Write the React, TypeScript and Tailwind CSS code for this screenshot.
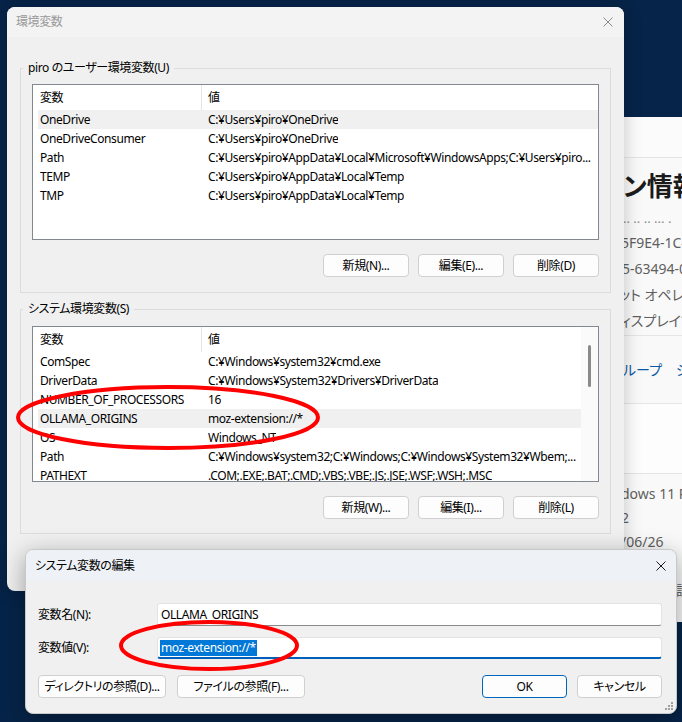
import React from "react";

type Row = [string, string];

const userRows: Row[] = [
  ["OneDrive", "C:¥Users¥piro¥OneDrive"],
  ["OneDriveConsumer", "C:¥Users¥piro¥OneDrive"],
  ["Path", "C:¥Users¥piro¥AppData¥Local¥Microsoft¥WindowsApps;C:¥Users¥piro..."],
  ["TEMP", "C:¥Users¥piro¥AppData¥Local¥Temp"],
  ["TMP", "C:¥Users¥piro¥AppData¥Local¥Temp"],
];

const sysRows: Row[] = [
  ["ComSpec", "C:¥Windows¥system32¥cmd.exe"],
  ["DriverData", "C:¥Windows¥System32¥Drivers¥DriverData"],
  ["NUMBER_OF_PROCESSORS", "16"],
  ["OLLAMA_ORIGINS", "moz-extension://*"],
  ["OS", "Windows_NT"],
  ["Path", "C:¥Windows¥system32;C:¥Windows;C:¥Windows¥System32¥Wbem;..."],
  ["PATHEXT", ".COM;.EXE;.BAT;.CMD;.VBS;.VBE;.JS;.JSE;.WSF;.WSH;.MSC"],
];

function CloseX({ color }: { color: string }) {
  return (
    <svg width="10" height="10" viewBox="0 0 10 10">
      <path d="M0.5 0.5 L9.5 9.5 M9.5 0.5 L0.5 9.5" stroke={color} strokeWidth="1" fill="none" />
    </svg>
  );
}

function WinButton({ children, className }: { children: React.ReactNode; className: string }) {
  return (
    <div className={"h-[23px] flex items-center justify-center rounded-[4px] border bg-[#fdfdfd] text-[12px] text-black " + className}>
      {children}
    </div>
  );
}

function ListBox({ rows, selected, scroll }: { rows: Row[]; selected: number; scroll: boolean }) {
  return (
    <div className="h-[156px] border border-[#828790] bg-white flex overflow-hidden">
      <div className="flex-1 min-w-0 flex flex-col">
        <div className="h-[25px] shrink-0 flex items-stretch text-[12px]">
          <div className="w-[169px] shrink-0 pl-[7px] flex items-center border-r border-[#e5e5e5]">変数</div>
          <div className="pl-[6px] flex items-center">値</div>
        </div>
        {rows.map((r, i) => (
          <div
            key={i}
            className={
              "h-[19px] shrink-0 ml-[5px] flex items-center text-[12px] whitespace-nowrap " +
              (i === selected ? "bg-[#f0f0f0]" : "")
            }
          >
            <div className="w-[163px] shrink-0 pl-[2px]">{r[0]}</div>
            <div className="pl-[7px] overflow-hidden">{r[1]}</div>
          </div>
        ))}
      </div>
      {scroll && (
        <div className="w-[17px] shrink-0 bg-[#fafafa] flex justify-center pt-[18px]">
          <div className="w-[3px] h-[42px] rounded-full bg-[#8a8a8a]" />
        </div>
      )}
    </div>
  );
}

function Group({
  label,
  children,
  className,
}: {
  label: string;
  children: React.ReactNode;
  className: string;
}) {
  return (
    <div className={"relative border border-[#dcdcdc] px-[11px] " + className}>
      <span className="absolute left-[2px] -top-[9px] px-[5px] bg-[#f0f0f0] leading-[16px] text-[12px] text-black">
        {label}
      </span>
      {children}
    </div>
  );
}

function ButtonRow({ labels }: { labels: string[] }) {
  return (
    <div className="mt-[14px] flex justify-end gap-[9px]">
      {labels.map((l) => (
        <WinButton key={l} className="w-[86px] border-[#d0d0d0]">
          {l}
        </WinButton>
      ))}
    </div>
  );
}

function SettingsWindow() {
  return (
    <div className="absolute left-[560px] top-[117px] w-[200px] h-[505px] bg-[#f9f9f9] flex flex-col text-[14px] text-[#5f5f5f] overflow-hidden tracking-normal">
      <div className="h-[41px] shrink-0 border-b border-[#e5e5e5] bg-[#fbfbfb]" />
      <div className="h-[178px] shrink-0 border-b border-[#e5e5e5] pl-[63px] flex flex-col">
        <div className="mt-[14px] leading-[28px] text-[26px] font-semibold text-[#1b1b1b] whitespace-nowrap">ン情報</div>
        <div className="mt-[17px] h-[9px] overflow-hidden">
          <div className="-mt-[8px] leading-[26px] text-[13px] whitespace-nowrap text-[#8a8a8a]">·· ·· ·· ··· ·</div>
        </div>
        <div className="mt-[4px] flex flex-col leading-[26px] whitespace-nowrap">
          <div className="-ml-[2px]">5F9E4-1C4</div>
          <div className="-ml-[1px]">5-63494-0</div>
          <div className="-ml-[4px]">ット オペレー</div>
          <div className="-ml-[3px]">ィスプレイで</div>
        </div>
      </div>
      <div className="h-[68px] shrink-0 border-b border-[#e5e5e5] pl-[63px] flex items-center gap-[14px] text-[#0a58a6] whitespace-nowrap">
        <span>ループ</span>
        <span>シ</span>
      </div>
      <div className="h-[70px] shrink-0 border-b border-[#e5e5e5] bg-[#fdfdfd]" />
      <div className="flex-1 pt-[8px] pl-[61px] flex flex-col leading-[24px] whitespace-nowrap">
        <div>dows 11 P</div>
        <div>2</div>
        <div>/06/26</div>
        <div>&nbsp;</div>
        <div className="pl-[55px]">設</div>
      </div>
    </div>
  );
}

function MainDialog() {
  return (
    <div className="absolute left-[7px] top-[7px] w-[617px] h-[584px] rounded-[8px] bg-[#f0f0f0] shadow-[0_0_18px_rgba(0,0,0,0.22)] overflow-hidden flex flex-col">
      <div className="h-[30px] shrink-0 bg-[#f3f3f3] flex items-center justify-between pl-[9px] pr-[11px]">
        <span className="text-[12px] text-[#9a9a9a]">環境変数</span>
        <CloseX color="#8a8a8a" />
      </div>
      <div className="px-[13px] pt-[31px] flex flex-col gap-[16px]">
        <Group label="piro のユーザー環境変数(U)" className="pt-[15px] pb-[15px]">
          <ListBox rows={userRows} selected={0} scroll={false} />
          <ButtonRow labels={["新規(N)...", "編集(E)...", "削除(D)"]} />
        </Group>
        <Group label="システム環境変数(S)" className="pt-[16px] pb-[14px]">
          <ListBox rows={sysRows} selected={3} scroll={true} />
          <ButtonRow labels={["新規(W)...", "編集(I)...", "削除(L)"]} />
        </Group>
      </div>
    </div>
  );
}

function EditDialog() {
  return (
    <div className="absolute left-[25px] top-[549px] w-[652px] h-[165px] rounded-[8px] bg-[#f0f0f0] border border-[#c8c8c8] shadow-[0_6px_24px_rgba(0,0,0,0.35)] overflow-hidden flex flex-col">
      <div className="h-[31px] shrink-0 bg-[#eef2f7] flex items-center justify-between pl-[9px] pr-[10px]">
        <span className="text-[12px] text-black">システム変数の編集</span>
        <CloseX color="#1a1a1a" />
      </div>
      <div className="pl-[12px] pr-[14px] pt-[22px] flex flex-col text-[12px] text-black">
        <div className="h-[23px] flex items-center">
          <div className="w-[119px] shrink-0">変数名(N):</div>
          <div className="flex-1 h-full bg-white border border-[#e3e3e3] border-b-[#8a8a8a] rounded-[3px] flex items-center pl-[3px]">
            OLLAMA_ORIGINS
          </div>
        </div>
        <div className="mt-[11px] h-[22px] flex items-center">
          <div className="w-[119px] shrink-0">変数値(V):</div>
          <div className="flex-1 h-full bg-white border border-[#e3e3e3] border-b-2 border-b-[#005fb8] rounded-[3px] flex items-center pl-[2px]">
            <span className="bg-[#0078d7] text-white leading-[16px] px-[1px]">moz-extension://*</span>
          </div>
        </div>
        <div className="mt-[16px] flex items-center">
          <WinButton className="w-[128px] border-[#d0d0d0]">ディレクトリの参照(D)...</WinButton>
          <WinButton className="ml-[11px] w-[128px] border-[#d0d0d0]">ファイルの参照(F)...</WinButton>
          <div className="flex-1" />
          <WinButton className="w-[85px] border-[#0067c0]">OK</WinButton>
          <WinButton className="ml-[10px] w-[85px] border-[#d0d0d0]">キャンセル</WinButton>
        </div>
      </div>
      <svg className="absolute right-[2px] bottom-[2px]" width="9" height="9" viewBox="0 0 9 9">
        <rect x="6" y="0" width="2" height="2" fill="#a0a0a0" />
        <rect x="3" y="3" width="2" height="2" fill="#a0a0a0" />
        <rect x="6" y="3" width="2" height="2" fill="#a0a0a0" />
        <rect x="0" y="6" width="2" height="2" fill="#a0a0a0" />
        <rect x="3" y="6" width="2" height="2" fill="#a0a0a0" />
        <rect x="6" y="6" width="2" height="2" fill="#a0a0a0" />
      </svg>
    </div>
  );
}

export default function App() {
  return (
    <div className="relative w-[682px] h-[722px] overflow-hidden bg-[#062449] font-['Noto_Sans','Noto_Sans_CJK_JP',sans-serif] [font-feature-settings:'palt'] tracking-[-0.4px] text-black">
      <SettingsWindow />
      <MainDialog />
      <EditDialog />
      <svg className="absolute left-0 top-0 pointer-events-none" width="682" height="722">
        <ellipse cx="168" cy="417.5" rx="150" ry="30.5" fill="none" stroke="#ff0000" strokeWidth="4" />
        <ellipse cx="209" cy="645.5" rx="88" ry="23.5" fill="none" stroke="#ff0000" strokeWidth="4" />
      </svg>
    </div>
  );
}
